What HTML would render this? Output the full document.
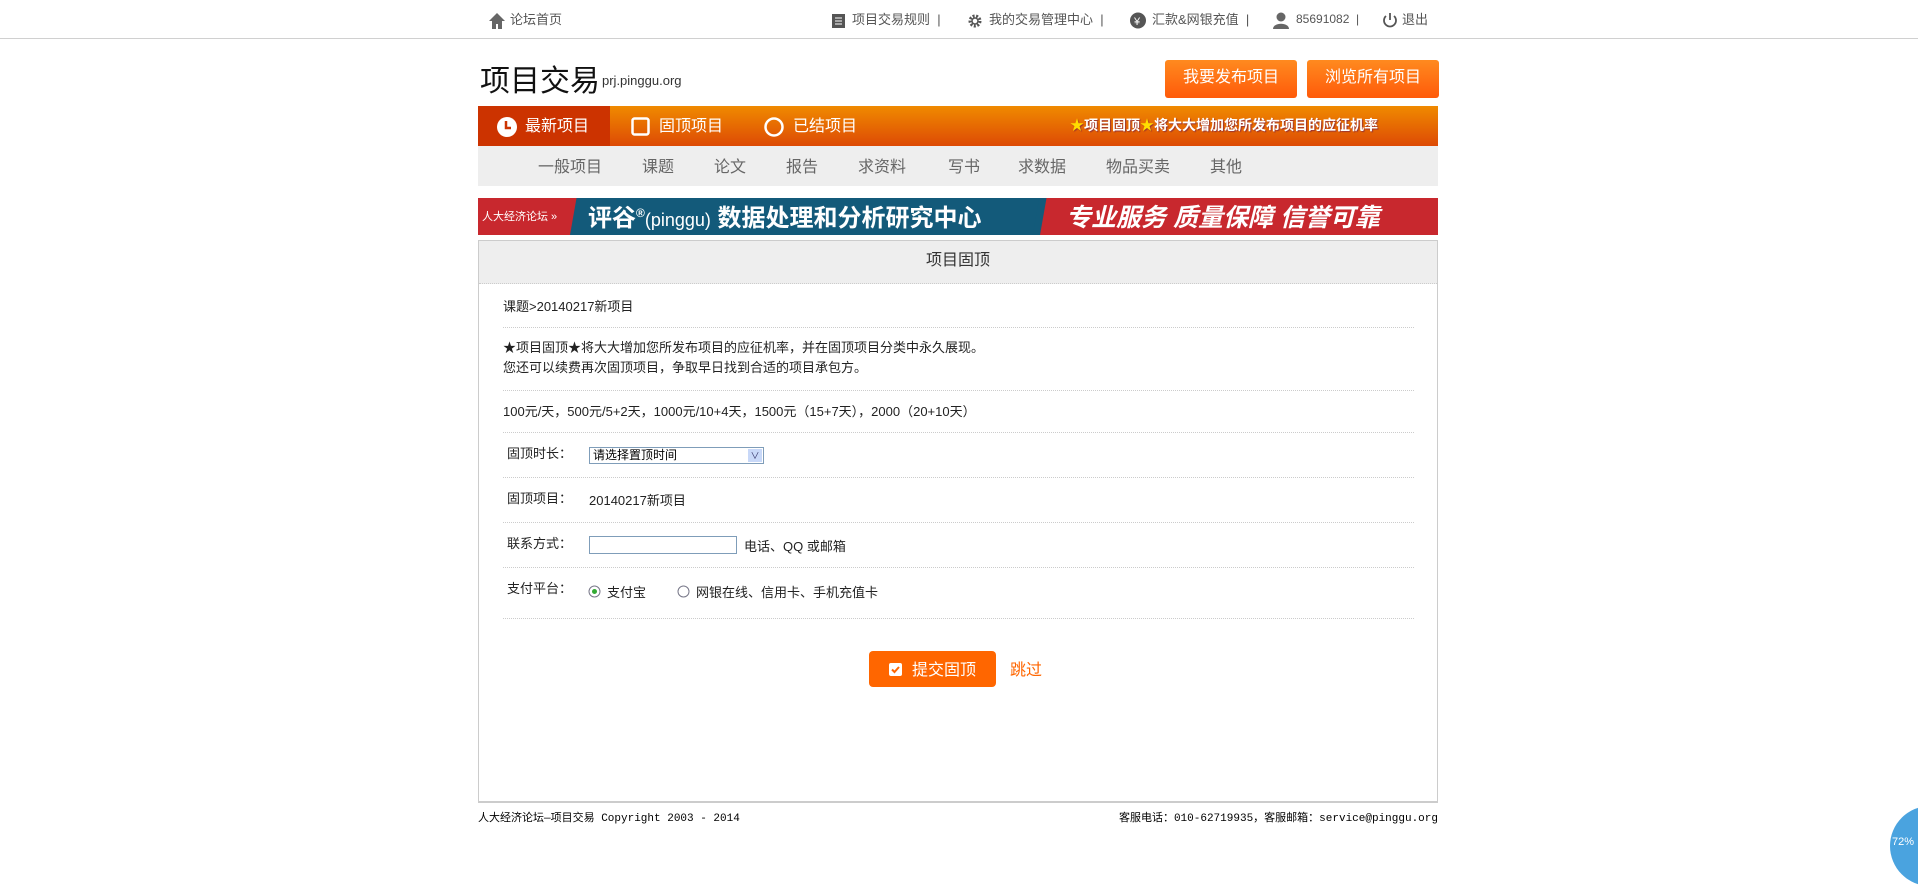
<!DOCTYPE html>
<html><head><meta charset="utf-8"><style>
*{margin:0;padding:0;box-sizing:border-box}
body{width:1918px;height:854px;background:#fff;font-family:"Liberation Sans","Noto Sans CJK SC",sans-serif;color:#333;position:relative;overflow:hidden;font-size:12px}
.a{position:absolute;white-space:nowrap}
.top{position:absolute;left:0;top:0;width:1918px;height:39px;border-bottom:1px solid #d0d0d0}
.top .a{top:9px;font-size:13px;color:#555}
.btn{position:absolute;top:60px;height:38px;width:132px;background:linear-gradient(#ff8a1f,#ff5a0a);border-radius:3px;color:#fff;font-size:16px;text-align:center;line-height:36px}
.nav{position:absolute;left:478px;top:106px;width:960px;height:40px;background:linear-gradient(#f08a00,#dd4a05)}
.sub{position:absolute;left:478px;top:146px;width:960px;height:40px;background:#eeeeee}
.sub span{position:absolute;top:7px;font-size:16px;color:#666}
.line{position:absolute;left:503px;width:911px;border-top:1px dotted #ccc}
.box{position:absolute;left:478px;top:240px;width:960px;height:563px;border:1px solid #ccc;border-bottom:2px solid #ccc}
.t{font-size:13px;color:#222}
</style></head><body>
<div class="top">
<svg class="a" style="left:488px;top:12px" width="18" height="18" viewBox="0 0 18 18"><path d="M9 1L1 9h3v8h4v-5h2v5h4V9h3z" fill="#666"/></svg>
<span class="a" style="left:510px">论坛首页</span>
<svg class="a" style="left:832px;top:14px" width="13" height="14"><rect width="13" height="14" fill="#555"/><path d="M3 4h7M3 7h7M3 10h7" stroke="#fff"/></svg>
<span class="a" style="left:852px">项目交易规则 &nbsp;|</span>
<svg class="a" style="left:966px;top:12px" width="18" height="18" viewBox="0 0 18 18"><circle cx="9" cy="9" r="5" fill="none" stroke="#555" stroke-width="3" stroke-dasharray="2 1.5"/><circle cx="9" cy="9" r="3" fill="none" stroke="#555" stroke-width="1.5"/></svg>
<span class="a" style="left:989px">我的交易管理中心 &nbsp;|</span>
<svg class="a" style="left:1130px;top:12px" width="16" height="17"><circle cx="8" cy="8.5" r="8" fill="#555"/><text x="4" y="13" fill="#fff" font-size="11">¥</text></svg>
<span class="a" style="left:1152px">汇款&amp;网银充值 &nbsp;|</span>
<svg class="a" style="left:1273px;top:12px" width="16" height="17"><circle cx="8" cy="5" r="4.5" fill="#666"/><path d="M0 17c0-7 16-7 16 0z" fill="#666"/></svg>
<span class="a" style="left:1296px;font-size:12px;top:12px">85691082 &nbsp;|</span>
<svg class="a" style="left:1382px;top:12px" width="16" height="17"><path d="M4 4a6 6 0 1 0 8 0" fill="none" stroke="#555" stroke-width="1.8"/><path d="M8 1v7" stroke="#555" stroke-width="1.8"/></svg>
<span class="a" style="left:1402px">退出</span>
</div>
<span class="a" style="left:480px;top:56px;font-size:30px;color:#111">项目交易</span>
<span class="a" style="left:602px;top:73px;font-size:13px;color:#333">prj.pinggu.org</span>
<div class="btn" style="left:1165px">我要发布项目</div>
<div class="btn" style="left:1307px">浏览所有项目</div>
<div class="nav">
<div style="position:absolute;left:0;top:0;width:132px;height:40px;background:#cc3300"></div>
<svg class="a" style="left:19px;top:11px" width="20" height="20"><circle cx="10" cy="10" r="10" fill="#fff"/><path d="M9 4v7h5" stroke="#cc3300" stroke-width="2.5" fill="none"/></svg>
<span class="a" style="left:47px;top:6px;color:#fff;font-size:16px">最新项目</span>
<svg class="a" style="left:153px;top:11px" width="19" height="19"><rect x="1.5" y="1.5" width="16" height="16" rx="2" fill="none" stroke="#fff" stroke-width="2.5"/></svg>
<span class="a" style="left:181px;top:6px;color:#fff;font-size:16px">固顶项目</span>
<svg class="a" style="left:286px;top:11px" width="20" height="20"><circle cx="10" cy="10" r="8.5" fill="none" stroke="#fff" stroke-width="2.5"/></svg>
<span class="a" style="left:315px;top:6px;color:#fff;font-size:16px">已结项目</span>
<span class="a" style="left:592px;top:9px;color:#fff;font-size:14px;font-weight:bold;text-shadow:1px 1px 1px #933"><span style="color:#ffdd00">★</span>项目固顶<span style="color:#ffdd00">★</span>将大大增加您所发布项目的应征机率</span>
</div>
<div class="sub">
<span style="left:60px">一般项目</span><span style="left:164px">课题</span><span style="left:236px">论文</span><span style="left:308px">报告</span><span style="left:380px">求资料</span><span style="left:470px">写书</span><span style="left:540px">求数据</span><span style="left:628px">物品买卖</span><span style="left:732px">其他</span>
</div>
<div class="a" style="left:478px;top:198px;width:960px;height:37px;background:#c8282e;overflow:hidden">
<div style="position:absolute;left:92px;top:0;width:470px;height:37px;background:#135a7a;transform:skewX(-10deg);transform-origin:0 100%"></div>
<div style="position:absolute;left:558px;top:0;width:6px;height:37px;background:#135a7a;transform:skewX(-10deg)"></div>
<span class="a" style="left:4px;top:10px;color:#fff;font-size:11px">人大经济论坛 »</span>
<span class="a" style="left:110px;top:0px;color:#fff;font-size:24px;font-weight:bold">评谷<sup style="font-size:12px">®</sup><span style="font-weight:normal;font-size:18px">(pinggu)</span> 数据处理和分析研究中心</span>
<span class="a" style="left:588px;top:0px;color:#fff;font-size:25px;font-weight:bold;font-style:italic">专业服务 质量保障 信誉可靠</span>
</div>
<div class="box">
<div style="height:43px;background:#eee;border-bottom:1px dotted #ccc;text-align:center;line-height:40px;font-size:16px;color:#333">项目固顶</div>
</div>
<span class="a t" style="left:503px;top:296px">课题&gt;20140217新项目</span>
<div class="line" style="top:327px"></div>
<span class="a t" style="left:503px;top:337px">★项目固顶★将大大增加您所发布项目的应征机率，并在固顶项目分类中永久展现。</span>
<span class="a t" style="left:503px;top:357px">您还可以续费再次固顶项目，争取早日找到合适的项目承包方。</span>
<div class="line" style="top:390px"></div>
<span class="a t" style="left:503px;top:401px">100元/天，500元/5+2天，1000元/10+4天，1500元（15+7天），2000（20+10天）</span>
<div class="line" style="top:432px"></div>
<span class="a t" style="left:507px;top:443px">固顶时长：</span>
<div class="a" style="left:589px;top:447px;width:175px;height:17px;border:1px solid #7f9db9;font-size:12px;line-height:14px;padding-left:3px;color:#000">请选择置顶时间<span style="position:absolute;right:1px;top:1px;width:14px;height:13px;background:#c8d8f8;font-size:9px;text-align:center;color:#336">∨</span></div>
<div class="line" style="top:477px"></div>
<span class="a t" style="left:507px;top:488px">固顶项目：</span>
<span class="a t" style="left:589px;top:490px">20140217新项目</span>
<div class="line" style="top:522px"></div>
<span class="a t" style="left:507px;top:533px">联系方式：</span>
<div class="a" style="left:589px;top:536px;width:148px;height:18px;border:1px solid #7f9db9"></div>
<span class="a t" style="left:744px;top:536px">电话、QQ 或邮箱</span>
<div class="line" style="top:567px"></div>
<span class="a t" style="left:507px;top:578px">支付平台：</span>
<svg class="a" style="left:588px;top:585px" width="13" height="13"><circle cx="6.5" cy="6.5" r="5.5" fill="#fff" stroke="#778"/><circle cx="6.5" cy="6.5" r="2.5" fill="#3a3"/></svg>
<span class="a t" style="left:607px;top:582px">支付宝</span>
<svg class="a" style="left:677px;top:585px" width="13" height="13"><circle cx="6.5" cy="6.5" r="5.5" fill="#fff" stroke="#778"/></svg>
<span class="a t" style="left:696px;top:582px">网银在线、信用卡、手机充值卡</span>
<div class="line" style="top:618px"></div>
<div class="a" style="left:869px;top:651px;width:127px;height:36px;background:#ff6600;border-radius:4px"></div>
<svg class="a" style="left:888px;top:662px" width="15" height="15"><rect x="1" y="1" width="13" height="13" rx="2" fill="#fff"/><path d="M4 7.5l2.5 2.5 4.5-5" stroke="#ff6600" stroke-width="2" fill="none"/></svg>
<span class="a" style="left:912px;top:656px;color:#fff;font-size:16px">提交固顶</span>
<span class="a" style="left:1010px;top:656px;color:#ff6600;font-size:16px">跳过</span>
<span class="a" style="left:478px;top:809px;font-size:11px;color:#000;font-family:'Liberation Mono','Noto Sans CJK SC',monospace">人大经济论坛—项目交易 Copyright 2003 - 2014</span>
<span class="a" style="right:480px;top:809px;font-size:11px;color:#000;font-family:'Liberation Mono','Noto Sans CJK SC',monospace">客服电话：010-62719935，客服邮箱：service@pinggu.org</span>
<div class="a" style="left:1890px;top:806px;width:80px;height:80px;border-radius:50%;background:#4aa3df"></div>
<span class="a" style="left:1892px;top:836px;color:#fff;font-size:11px">72%</span>
</body></html>
